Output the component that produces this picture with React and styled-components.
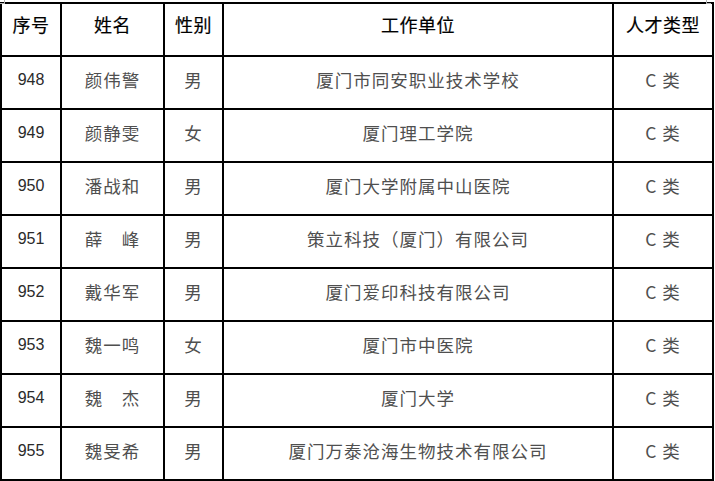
import React from "react";
import styled, { createGlobalStyle } from "styled-components";

const GlobalStyle = createGlobalStyle`
  html, body {
    margin: 0;
    padding: 0;
    background: #ffffff;
  }
  body {
    font-family: "Noto Sans CJK SC", "Noto Sans", sans-serif;
  }
`;

const Page = styled.div`
  position: relative;
  width: 715px;
  height: 481px;
  padding-top: 2px;
  box-sizing: border-box;
  overflow: hidden;
`;

const Corner = styled.div`
  position: absolute;
  top: 0;
  width: 4px;
  height: 3px;
  border-bottom: 1px solid #b0b0b0;
  ${({ side }) =>
    side === "left"
      ? "left: 0; border-right: 1px solid #b0b0b0;"
      : "right: 4px; border-left: 1px solid #b0b0b0;"}
`;

const Table = styled.table`
  border-collapse: collapse;
  table-layout: fixed;
  width: 712px;
`;

const Head = styled.th`
  height: 40px;
  border: 2px solid #000;
  padding: 0 0 11px;
  font-size: 18px;
  line-height: 20px;
  letter-spacing: 0.5px;
  font-weight: 400;
  color: #000;
  text-align: center;
  vertical-align: middle;
  -webkit-text-stroke: 0.2px #000;
`;

const Cell = styled.td`
  height: 45px;
  border: 2px solid #000;
  padding: 0 0 6px;
  font-size: ${({ num }) => (num ? "16px" : "17.5px")};
  line-height: 20px;
  letter-spacing: ${({ num }) => (num ? "0" : "1px")};
  font-weight: 400;
  color: ${({ num }) => (num ? "#2a2a2a" : "#4f4f4f")};
  font-family: ${({ num }) =>
    num
      ? '"Liberation Sans", "Noto Sans CJK SC", sans-serif'
      : '"Noto Sans CJK SC", sans-serif'};
  text-align: center;
  vertical-align: middle;
  white-space: nowrap;
`;

const cols = [60, 103, 59, 390, 100];

const rows = [
  ["948", "颜伟警", "男", "厦门市同安职业技术学校"],
  ["949", "颜静雯", "女", "厦门理工学院"],
  ["950", "潘战和", "男", "厦门大学附属中山医院"],
  ["951", "薛　峰", "男", "策立科技（厦门）有限公司"],
  ["952", "戴华军", "男", "厦门爱印科技有限公司"],
  ["953", "魏一鸣", "女", "厦门市中医院"],
  ["954", "魏　杰", "男", "厦门大学"],
  ["955", "魏旻希", "男", "厦门万泰沧海生物技术有限公司"],
];

export default function App() {
  return (
    <Page>
      <GlobalStyle />
      <Corner side="left" />
      <Corner side="right" />
      <Table>
        <colgroup>
          {cols.map((w, i) => (
            <col key={i} style={{ width: w }} />
          ))}
        </colgroup>
        <thead>
          <tr>
            <Head>序号</Head>
            <Head>姓名</Head>
            <Head>性别</Head>
            <Head>工作单位</Head>
            <Head>人才类型</Head>
          </tr>
        </thead>
        <tbody>
          {rows.map((r) => (
            <tr key={r[0]}>
              <Cell num>{r[0]}</Cell>
              <Cell>{r[1]}</Cell>
              <Cell>{r[2]}</Cell>
              <Cell>{r[3]}</Cell>
              <Cell>C 类</Cell>
            </tr>
          ))}
        </tbody>
      </Table>
    </Page>
  );
}
